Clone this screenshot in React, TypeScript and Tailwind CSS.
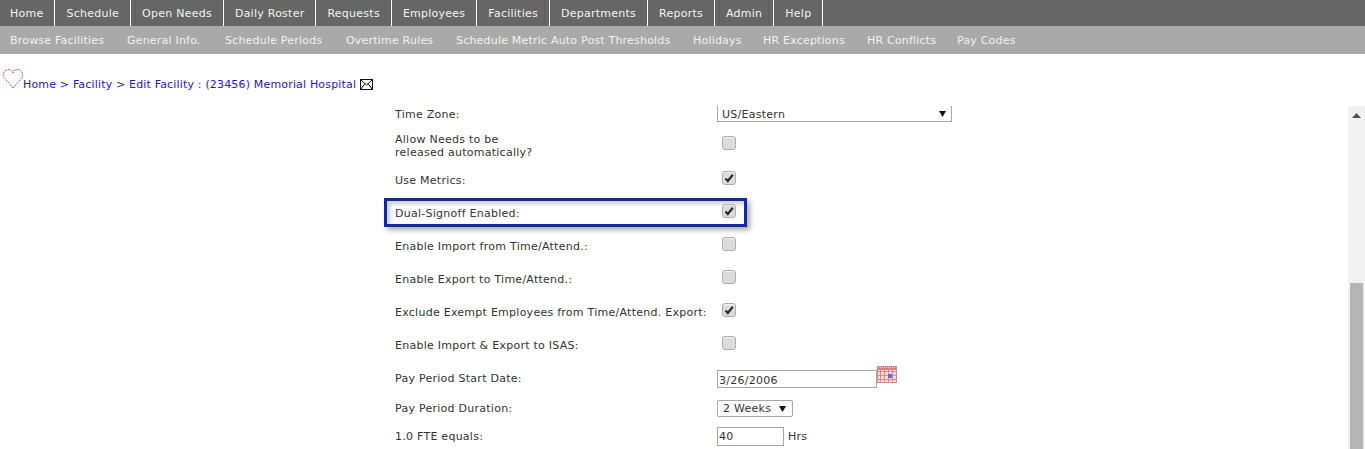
import React from 'react';

const mainNav = ['Home', 'Schedule', 'Open Needs', 'Daily Roster', 'Requests', 'Employees', 'Facilities', 'Departments', 'Reports', 'Admin', 'Help'];
const subNav = [
  { label: 'Browse Facilities', width: 'w-[117px]' },
  { label: 'General Info.', width: 'w-[98px]' },
  { label: 'Schedule Periods', width: 'w-[121px]' },
  { label: 'Overtime Rules', width: 'w-[110px]' },
  { label: 'Schedule Metric Auto Post Thresholds', width: 'w-[237px]' },
  { label: 'Holidays', width: 'w-[70px]' },
  { label: 'HR Exceptions', width: 'w-[104px]' },
  { label: 'HR Conflicts', width: 'w-[90px]' },
  { label: 'Pay Codes', width: 'w-[70px]' },
];

function Checkbox({ checked }: { checked?: boolean }) {
  return (
    <span className="flex h-[14px] w-[14px] items-center justify-center rounded-[3px] border border-[#adadad] bg-[#dcdcdc] shadow-[inset_0_1px_1px_#f4f4f4]">
      {checked && (
        <svg width="12" height="12" viewBox="0 0 12 12">
          <path d="M2.500 6.500 L4.800 9 L9.800 2.800" fill="none" stroke="#2b2b2b" strokeWidth="2.200" />
        </svg>
      )}
    </span>
  );
}

function CheckRow({ label, checked }: { label: string; checked?: boolean }) {
  return (
    <div className="flex h-[33px] items-center">
      <div className="w-[322px] pt-[1px]">{label}</div>
      <div className="ml-[5px] mb-[4px]">
        <Checkbox checked={checked} />
      </div>
    </div>
  );
}

function Arrow() {
  return (
    <svg width="7" height="6" viewBox="0 0 7 6">
      <path d="M0 0 H7 L3.500 6 Z" fill="#111111" />
    </svg>
  );
}

function Heart() {
  return (
    <svg width="22" height="21" viewBox="0 0 22 21" className="shrink-0">
      <path d="M11 20 L2 9.500 C0 6 2.500 1.500 6.500 1.500 C9 1.500 10.500 3 11 5 C11.500 3 13 1.500 15.500 1.500 C19.500 1.500 22 6 20 9.500 Z" fill="none" stroke="#dc4560" strokeWidth="1" strokeDasharray="2 1" />
    </svg>
  );
}

function Envelope() {
  return (
    <svg width="13" height="11" viewBox="0 0 13 11" className="shrink-0">
      <rect x="0.500" y="0.500" width="12" height="10" fill="#ffffff" stroke="#111111" />
      <path d="M1 1 L6.500 6 L12 1 M1 10 L5 4.500 M12 10 L8 4.500" fill="none" stroke="#111111" />
    </svg>
  );
}

function CalendarIcon() {
  return (
    <svg width="20" height="18" viewBox="0 0 20 18">
      <rect x="0" y="0" width="20" height="17" fill="#f8dada" />
      <rect x="0" y="0" width="20" height="4" fill="#d97f7f" />
      <path d="M1 1.500 H19" stroke="#f3c9c9" strokeDasharray="1 1" />
      <path d="M0 5.500 H20 M0 9.500 H20 M0 13.500 H20 M3.500 4 V17 M7.500 4 V17 M11.500 4 V17 M15.500 4 V17" stroke="#e08a8a" strokeWidth="1" />
      <rect x="11" y="8" width="4" height="4" fill="#5b6fd8" />
      <rect x="0.500" y="0.500" width="19" height="16" fill="none" stroke="#d08a8a" />
    </svg>
  );
}

export default function App() {
  return (
    <div className="flex h-[449px] flex-col overflow-hidden bg-white text-[11px] leading-[13px] tracking-[0.26px] text-[#333333] [font-family:'DejaVu_Sans',sans-serif]">
      <div className="flex h-[26px] bg-[#666666] tracking-[0.25px] text-[#f2f2f2]">
        {mainNav.map((item, i) => (
          <div key={item} className={`flex items-center border-r border-white pr-[11px] ${i === 0 ? 'pl-[10px]' : 'pl-[11px]'}`}>
            {item}
          </div>
        ))}
      </div>
      <div className="flex h-[28px] items-center bg-[#a9a9a9] pl-[10px] tracking-[0.2px] text-[#f0f0f0]">
        {subNav.map((item) => (
          <span key={item.label} className={`shrink-0 ${item.width}`}>{item.label}</span>
        ))}
      </div>

      <div className="flex h-[52px] items-start pl-[2px] pt-[14px]">
        <Heart />
        <div className="mt-[10px] flex items-center gap-[4px] tracking-[0.17px] text-[#2a13c4]">
          <span className="-ml-[1px]">Home &gt; Facility &gt; Edit Facility : (23456) Memorial Hospital</span>
          <Envelope />
        </div>
      </div>

      <div className="flex min-h-0 flex-1">
        <div className="flex-1 pl-[395px]">
          <div className="flex h-[16px] items-center">
            <div className="w-[322px] pt-[1px]">Time Zone:</div>
            <div className="flex h-[16px] w-[235px] items-center justify-between border-x border-b border-[#a6a6a6] pl-[4px] pr-[5px] pt-[1px]">
              <span>US/Eastern</span>
              <Arrow />
            </div>
          </div>

          <div className="flex h-[41px]">
            <div className="w-[322px] pt-[11px]">
              Allow Needs to be
              <br />
              released automatically?
            </div>
            <div className="ml-[5px] pt-[14px]">
              <Checkbox />
            </div>
          </div>

          <CheckRow label="Use Metrics:" checked />

          <div className="relative">
            <CheckRow label="Dual-Signoff Enabled:" checked />
            <div className="pointer-events-none absolute left-[-11px] top-[2px] h-[29px] w-[363px] border-[3px] border-[#142a9c] shadow-[3px_3px_5px_#aaaaaa,inset_3px_3px_4px_#cccccc]" />
          </div>

          <CheckRow label="Enable Import from Time/Attend.:" />
          <CheckRow label="Enable Export to Time/Attend.:" />
          <CheckRow label="Exclude Exempt Employees from Time/Attend. Export:" checked />
          <CheckRow label="Enable Import & Export to ISAS:" />

          <div className="flex h-[34px] items-center">
            <div className="w-[322px]">Pay Period Start Date:</div>
            <div className="mt-[2px] flex h-[18px] w-[160px] items-center border border-[#a6a6a6] pl-[1px] pt-[2px]">3/26/2006</div>
            <div className="mb-[6px]">
              <CalendarIcon />
            </div>
          </div>

          <div className="flex h-[26px] items-center">
            <div className="w-[322px]">Pay Period Duration:</div>
            <div className="flex h-[17px] w-[76px] items-center justify-between rounded-[2px] border border-[#a6a6a6] pl-[5px] pr-[6px] pt-[1px]">
              <span>2 Weeks</span>
              <Arrow />
            </div>
          </div>

          <div className="flex h-[30px] items-center">
            <div className="w-[322px]">1.0 FTE equals:</div>
            <div className="flex h-[19px] w-[67px] items-center border border-[#a6a6a6] pl-[1px] pt-[1px]">40</div>
            <span className="ml-[4px]">Hrs</span>
          </div>
        </div>

        <div className="flex w-[17px] flex-col bg-[#f1f1f1]">
          <div className="flex h-[17px] items-center justify-center pt-[1px]">
            <svg width="9" height="5" viewBox="0 0 9 5">
              <path d="M0 5 L4.500 0 L9 5 Z" fill="#505050" />
            </svg>
          </div>
          <div className="mx-[2px] mt-[160px] flex-1 bg-[#b5b5b5]" />
        </div>
      </div>
    </div>
  );
}
